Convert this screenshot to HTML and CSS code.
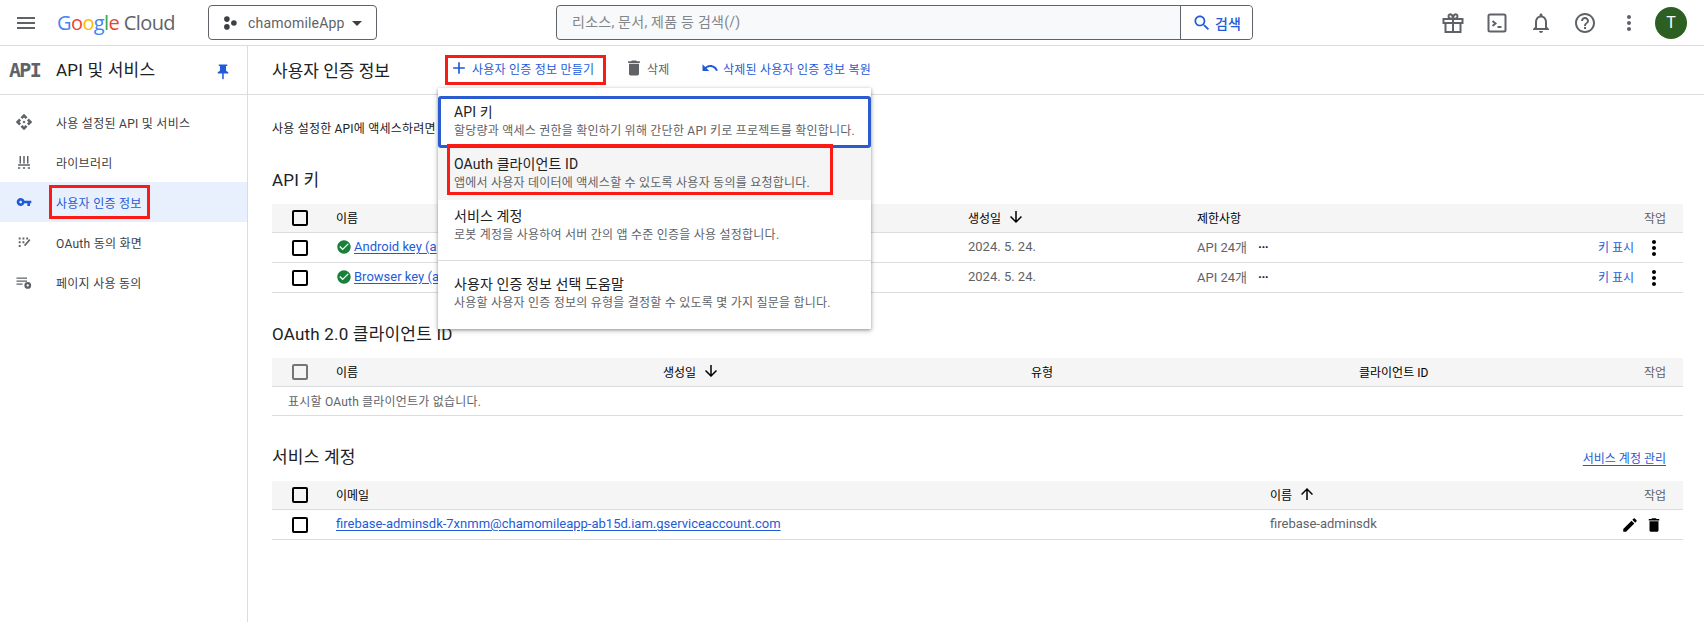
FILE: index.html
```html
<!DOCTYPE html>
<html lang="ko">
<head>
<meta charset="utf-8">
<title>사용자 인증 정보</title>
<link rel="stylesheet" href="styles.css">
</head>
<body>
<div class="page">
  <header class="topbar">
    <svg class="ico menu-ico" viewBox="0 0 24 24"><path d="M3 18h18v-2H3v2zm0-5h18v-2H3v2zm0-7v2h18V6H3z"/></svg>
    <div class="logo"><span class="b">G</span><span class="r">o</span><span class="y">o</span><span class="b">g</span><span class="g">l</span><span class="r">e</span> <span class="cloud">Cloud</span></div>
    <div class="project">
      <svg class="ico dots" viewBox="0 0 18 18"><circle cx="5" cy="4" r="3.600"/><circle cx="5" cy="14" r="3.600"/><circle cx="14" cy="9" r="3.600"/></svg>
      <span class="project-name">chamomileApp</span>
      <svg class="ico caret" viewBox="0 0 24 24"><path d="M7 10l5 5 5-5z"/></svg>
    </div>
    <div class="search">
      <span class="search-input">리소스, 문서, 제품 등 검색(/)</span>
      <span class="search-btn"><svg class="ico s20 blue" viewBox="0 0 24 24"><path d="M15.500 14h-.79l-.28-.27C15.410 12.590 16 11.110 16 9.500 16 5.910 13.090 3 9.500 3S3 5.910 3 9.500 5.910 16 9.500 16c1.610 0 3.090-.59 4.230-1.570l.27.28v.79l5 4.990L20.490 19l-4.990-5zm-6 0C7.010 14 5 11.990 5 9.500S7.010 5 9.500 5 14 7.010 14 9.500 11.990 14 9.500 14z"/></svg>검색</span>
    </div>
    <div class="top-actions">
      <svg class="ico s24 stroke" viewBox="0 0 24 24"><path d="M2.500 8h19v4h-19zM4.500 12v9h15v-9M12 8v13M12 8C9 8 7.500 6.800 7.500 5.300 7.500 3.800 9 3 10 3.500 11.300 4 12 6 12 8zM12 8c3 0 4.500-1.200 4.500-2.700 0-1.500-1.500-2.300-2.500-1.800C12.700 4 12 6 12 8z"/></svg>
      <svg class="ico s24 stroke" viewBox="0 0 24 24"><rect x="3.500" y="3.500" width="17" height="17" rx="1.500"/><path d="M7.500 10l3 2.500-3 2.500M12.500 16h4"/></svg>
      <svg class="ico s24" viewBox="0 0 24 24"><path d="M12 22c1.100 0 2-.9 2-2h-4c0 1.100.9 2 2 2zm6-6v-5c0-3.070-1.630-5.640-4.500-6.320V4c0-.83-.67-1.500-1.500-1.500s-1.500.67-1.500 1.500v.68C7.640 5.360 6 7.920 6 11v5l-2 2v1h16v-1l-2-2zm-2 1H8v-6c0-2.480 1.510-4.500 4-4.500s4 2.020 4 4.500v6z"/></svg>
      <svg class="ico s24" viewBox="0 0 24 24"><path d="M11 18h2v-2h-2v2zm1-16C6.480 2 2 6.480 2 12s4.480 10 10 10 10-4.480 10-10S17.520 2 12 2zm0 18c-4.410 0-8-3.590-8-8s3.590-8 8-8 8 3.590 8 8-3.590 8-8 8zm0-14c-2.210 0-4 1.790-4 4h2c0-1.100.9-2 2-2s2 .9 2 2c0 2-3 1.750-3 5h2c0-2.250 3-2.500 3-5 0-2.210-1.790-4-4-4z"/></svg>
      <svg class="ico s24" viewBox="0 0 24 24"><path d="M12 8c1.100 0 2-.9 2-2s-.9-2-2-2-2 .9-2 2 .9 2 2 2zm0 2c-1.100 0-2 .9-2 2s.9 2 2 2 2-.9 2-2-.9-2-2-2zm0 6c-1.100 0-2 .9-2 2s.9 2 2 2 2-.9 2-2-.9-2-2-2z"/></svg>
    </div>
    <div class="avatar">T</div>
  </header>

  <div class="content">
    <aside class="sidebar">
      <div class="side-head">
        <span class="api-mark">API</span>
        <span class="side-title">API 및 서비스</span>
        <svg class="ico pin" viewBox="0 0 24 24"><path d="M16 9V4h1c.55 0 1-.45 1-1s-.45-1-1-1H7c-.55 0-1 .45-1 1s.45 1 1 1h1v5c0 1.660-1.340 3-3 3v2h5.970v7l1 1 1-1v-7H19v-2c-1.660 0-3-1.340-3-3z"/></svg>
      </div>
      <nav class="nav">
        <a class="nav-item">
          <svg class="ico nav-ico" viewBox="0 0 24 24"><path d="M14 12l-2 2-2-2 2-2 2 2zm-2-6l2.120 2.120 2.500-2.500L12 1 7.380 5.620l2.500 2.500L12 6zm-6 6l2.120-2.120-2.500-2.500L1 12l4.620 4.620 2.500-2.500L6 12zm12 0l-2.120 2.120 2.500 2.500L23 12l-4.620-4.620-2.500 2.500L18 12zm-6 6l-2.120-2.120-2.500 2.500L12 23l4.620-4.620-2.500-2.500L12 18z"/></svg>
          사용 설정된 API 및 서비스
        </a>
        <a class="nav-item">
          <svg class="ico nav-ico" viewBox="0 0 24 24"><path d="M6 4h2v10H6zM11 4h2v10h-2zM16 4h2v10h-2zM4 15h16v2H4zM4 19h3v2H4zM10.500 19h3v2h-3zM17 19h3v2h-3z"/></svg>
          라이브러리
        </a>
        <a class="nav-item active">
          <svg class="ico nav-ico key-ico" viewBox="0 0 24 24"><path d="M12.650 10C11.830 7.670 9.610 6 7 6c-3.310 0-6 2.690-6 6s2.690 6 6 6c2.610 0 4.830-1.670 5.650-4H17v4h4v-4h2v-4H12.650zM7 14c-1.100 0-2-.9-2-2s.9-2 2-2 2 .9 2 2-.9 2-2 2z"/></svg>
          사용자 인증 정보
        </a>
        <a class="nav-item">
          <svg class="ico nav-ico" viewBox="0 0 24 24"><path d="M5 6h2.500v2.500H5zM10 6h2.500v2.500H10zM15 6h2.500v2.500H15zM5 11h2.500v2.500H5zM10 11h2.500v2.500H10zM5 16h2.500v2.500H5zM19 8l1.500 1.500-7 8L12 16z"/></svg>
          OAuth 동의 화면
        </a>
        <a class="nav-item">
          <svg class="ico nav-ico" viewBox="0 0 24 24"><path d="M2 6h14v1.500H2zM2 10h14v1.500H2zM2 14h8v1.500H2z"/><circle cx="17" cy="16.500" r="4.500"/><circle class="hole" cx="17" cy="16.500" r="1.500"/></svg>
          페이지 사용 동의
        </a>
      </nav>
    </aside>

    <main class="main">
      <div class="page-head">
        <h1 class="page-title">사용자 인증 정보</h1>
        <button class="act act-create"><svg class="ico s20 blue" viewBox="0 0 24 24"><path d="M19 13h-6v6h-2v-6H5v-2h6V5h2v6h6v2z"/></svg>사용자 인증 정보 만들기</button>
        <button class="act act-delete"><svg class="ico s20 grey" viewBox="0 0 24 24"><path d="M6 19c0 1.100.9 2 2 2h8c1.100 0 2-.9 2-2V7H6v12zM19 4h-3.500l-1-1h-5l-1 1H5v2h14V4z"/></svg>삭제</button>
        <button class="act act-restore"><svg class="ico s18 blue" viewBox="0 0 24 24"><path d="M12.500 8c-2.650 0-5.050.99-6.900 2.600L2 7v9h9l-3.620-3.620c1.390-1.160 3.160-1.880 5.120-1.880 3.540 0 6.550 2.310 7.600 5.500l2.370-.78C21.080 11.030 17.150 8 12.500 8z"/></svg>삭제된 사용자 인증 정보 복원</button>
      </div>

      <div class="body">
        <p class="intro">사용 설정한 API에 액세스하려면</p>

        <h2 class="sec sec-api">API 키</h2>
        <div class="table t-api">
          <div class="row head">
            <span class="cb"></span><span>이름</span><span class="sort">생성일<svg class="ico s18 black" viewBox="0 0 24 24"><path d="M20 12l-1.410-1.410L13 16.170V4h-2v12.170l-5.580-5.590L4 12l8 8 8-8z"/></svg></span><span>제한사항</span><span class="end muted">작업</span>
          </div>
          <div class="row">
            <span class="cb"></span><span class="name"><svg class="ico s16 green" viewBox="0 0 24 24"><path d="M12 2C6.480 2 2 6.480 2 12s4.480 10 10 10 10-4.480 10-10S17.520 2 12 2zm-2 15l-5-5 1.410-1.410L10 14.170l7.590-7.590L19 8l-9 9z"/></svg><a class="link">Android key (a</a></span><span class="muted val">2024. 5. 24.</span><span class="muted val limit">API 24개<b class="more">···</b></span><span class="end rowact"><a class="plain">키 표시</a><svg class="ico s24 black" viewBox="0 0 24 24"><path d="M12 8c1.100 0 2-.9 2-2s-.9-2-2-2-2 .9-2 2 .9 2 2 2zm0 2c-1.100 0-2 .9-2 2s.9 2 2 2 2-.9 2-2-.9-2-2-2zm0 6c-1.100 0-2 .9-2 2s.9 2 2 2 2-.9 2-2-.9-2-2-2z"/></svg></span>
          </div>
          <div class="row">
            <span class="cb"></span><span class="name"><svg class="ico s16 green" viewBox="0 0 24 24"><path d="M12 2C6.480 2 2 6.480 2 12s4.480 10 10 10 10-4.480 10-10S17.520 2 12 2zm-2 15l-5-5 1.410-1.410L10 14.170l7.590-7.590L19 8l-9 9z"/></svg><a class="link">Browser key (a</a></span><span class="muted val">2024. 5. 24.</span><span class="muted val limit">API 24개<b class="more">···</b></span><span class="end rowact"><a class="plain">키 표시</a><svg class="ico s24 black" viewBox="0 0 24 24"><path d="M12 8c1.100 0 2-.9 2-2s-.9-2-2-2-2 .9-2 2 .9 2 2 2zm0 2c-1.100 0-2 .9-2 2s.9 2 2 2 2-.9 2-2-.9-2-2-2zm0 6c-1.100 0-2 .9-2 2s.9 2 2 2 2-.9 2-2-.9-2-2-2z"/></svg></span>
          </div>
        </div>

        <h2 class="sec sec-oauth">OAuth 2.0 클라이언트 ID</h2>
        <div class="table t-oauth">
          <div class="row head">
            <span class="cb off"></span><span>이름</span><span class="sort">생성일<svg class="ico s18 black" viewBox="0 0 24 24"><path d="M20 12l-1.410-1.410L13 16.170V4h-2v12.170l-5.580-5.590L4 12l8 8 8-8z"/></svg></span><span>유형</span><span>클라이언트 ID</span><span class="end muted">작업</span>
          </div>
          <div class="row empty"><span class="muted">표시할 OAuth 클라이언트가 없습니다.</span></div>
        </div>

        <div class="sec-row">
          <h2 class="sec">서비스 계정</h2>
          <a class="link manage">서비스 계정 관리</a>
        </div>
        <div class="table t-svc">
          <div class="row head">
            <span class="cb"></span><span>이메일</span><span class="sort">이름<svg class="ico s18 black" viewBox="0 0 24 24"><path d="M4 12l1.410 1.410L11 7.830V20h2V7.830l5.580 5.590L20 12l-8-8-8 8z"/></svg></span><span class="end muted">작업</span>
          </div>
          <div class="row">
            <span class="cb"></span><span><a class="link">firebase-adminsdk-7xnmm@chamomileapp-ab15d.iam.gserviceaccount.com</a></span><span class="muted val">firebase-adminsdk</span><span class="end rowact svc-act"><svg class="ico s18 black" viewBox="0 0 24 24"><path d="M3 17.250V21h3.750L17.810 9.940l-3.750-3.750L3 17.250zM20.710 7.040c.39-.39.39-1.020 0-1.410l-2.340-2.340c-.39-.39-1.020-.39-1.410 0l-1.830 1.830 3.750 3.750 1.830-1.830z"/></svg><svg class="ico s18 black" viewBox="0 0 24 24"><path d="M6 19c0 1.100.9 2 2 2h8c1.100 0 2-.9 2-2V7H6v12zM19 4h-3.500l-1-1h-5l-1 1H5v2h14V4z"/></svg></span>
          </div>
        </div>
      </div>
    </main>
  </div>

  <div class="dropdown">
    <div class="opt focused"><strong>API 키</strong><small>할당량과 액세스 권한을 확인하기 위해 간단한 API 키로 프로젝트를 확인합니다.</small></div>
    <div class="opt hovered"><strong>OAuth 클라이언트 ID</strong><small>앱에서 사용자 데이터에 액세스할 수 있도록 사용자 동의를 요청합니다.</small></div>
    <div class="opt service"><strong>서비스 계정</strong><small>로봇 계정을 사용하여 서버 간의 앱 수준 인증을 사용 설정합니다.</small></div>
    <div class="opt helper"><strong>사용자 인증 정보 선택 도움말</strong><small>사용할 사용자 인증 정보의 유형을 결정할 수 있도록 몇 가지 질문을 합니다.</small></div>
  </div>

  <div class="mark mark-nav"></div>
  <div class="mark mark-create"></div>
  <div class="mark mark-oauth"></div>
</div>
</body>
</html>
```

FILE: styles.css
```css
* { box-sizing: border-box; }
html, body { margin: 0; padding: 0; }
body {
  font-family: Roboto, "Noto Sans CJK KR", sans-serif;
  color: #202124;
  background: #fff;
  font-size: 12px;
}
.page { position: relative; width: 1704px; height: 622px; overflow: hidden; display: flex; flex-direction: column; }
.ico { display: block; flex: none; fill: #5f6368; }
.s16 { width: 16px; height: 16px; }
.s18 { width: 18px; height: 18px; }
.s20 { width: 20px; height: 20px; }
.s24 { width: 24px; height: 24px; }
.blue { fill: #1f5bd8; }
.grey { fill: #5f6368; }
.black { fill: #000; }
.green { fill: #188038; }
.stroke { fill: none; stroke: #5f6368; stroke-width: 2; }

/* top bar */
.topbar { height: 46px; flex: none; border-bottom: 1px solid #dadce0; display: flex; align-items: center; padding-left: 14px; }
.menu-ico { width: 24px; height: 24px; margin-right: 19px; }
.logo { width: 151px; font-family: "Open Sans", sans-serif; font-size: 20px; letter-spacing: -.6px; white-space: nowrap; line-height: 44px; }
.logo .b { color: #4285f4; } .logo .r { color: #ea4335; } .logo .y { color: #fbbc04; } .logo .g { color: #34a853; } .logo .cloud { color: #5f6368; }
.project { width: 169px; height: 35px; border: 1px solid #5f6368; border-radius: 4px; display: flex; align-items: center; padding-left: 14px; color: #5f6368; font-size: 14px; }
.dots { width: 14px; height: 14px; fill: #3c4043; margin-right: 11px; }
.project-name { letter-spacing: .2px; }
.caret { width: 24px; height: 24px; margin-left: 0; fill: #3c4043; }
.search { width: 697px; height: 35px; margin-left: 179px; border: 1px solid #5f6368; border-radius: 4px; display: flex; background: #f8f9fa; }
.search-input { flex: 1; padding-left: 15px; line-height: 33px; font-size: 14px; letter-spacing: .25px; color: #80868b; }
.search-btn { width: 72px; border-left: 1px solid #5f6368; background: #fff; border-radius: 0 4px 4px 0; display: flex; align-items: center; justify-content: center; gap: 3px; color: #1f5bd8; font-size: 14px; font-weight: 500; }
.top-actions { display: flex; gap: 20px; margin-left: 188px; }
.avatar { width: 32px; height: 32px; margin-left: 14px; border-radius: 50%; background: #2d5f23; color: #fff; font-size: 16px; line-height: 32px; text-align: center; }

/* layout */
.content { flex: 1; display: flex; min-height: 0; }
.sidebar { width: 248px; flex: none; border-right: 1px solid #dadce0; }
.side-head { height: 49px; border-bottom: 1px solid #dadce0; display: flex; align-items: center; padding: 0 0 3px 9px; }
.api-mark { width: 47px; margin-top: 2px; font-family: "DejaVu Sans Mono", monospace; font-weight: 700; font-size: 20px; letter-spacing: -1.700px; color: #5f6368; }
.side-title { flex: 1; font-size: 17px; letter-spacing: .2px; color: #202124; }
.pin { width: 18px; height: 18px; margin: 6px 15px 0 0; fill: #1f5bd8; }
.nav { padding-top: 7px; }
.nav-item { height: 40px; display: flex; align-items: center; padding-left: 15px; color: #3c4043; font-size: 12px; letter-spacing: .27px; }
.nav-ico { width: 18px; height: 18px; margin-right: 23px; }
.key-ico { width: 16px; height: 16px; margin: 0 24px 0 1px; }
.nav-item.active { background: #e8f0fe; color: #1f5bd8; }
.nav-item.active .nav-ico { fill: #1f5bd8; }
.hole { fill: #fff; }

.main { flex: 1; min-width: 0; }
.page-head { height: 49px; border-bottom: 1px solid #dadce0; display: flex; align-items: center; padding: 0 0 2px 24px; }
.page-title { margin: 0; font-size: 17px; font-weight: 400; width: 177px; white-space: nowrap; }
.act { border: 0; background: none; padding: 0; margin-bottom: 2px; font: inherit; font-size: 12px; letter-spacing: .22px; display: flex; align-items: center; color: #1f5bd8; white-space: nowrap; }
.act-create { width: 175px; gap: 3px; }
.act-delete { width: 77px; gap: 3px; color: #5f6368; }
.act-restore { gap: 4px; }

.body { padding: 0 21px 0 24px; }
.intro { margin: 0; padding-top: 25px; height: 66px; line-height: 18px; font-size: 12px; letter-spacing: .2px; color: #202124; }
.sec { margin: 0; font-size: 17px; letter-spacing: .2px; font-weight: 400; line-height: 22px; color: #202124; }
.sec-api { height: 43px; padding-top: 8px; }
.sec-oauth { height: 35px; margin-top: 30px; }
.sec-row { display: flex; justify-content: space-between; align-items: center; margin-top: 17px; height: 48px; padding-right: 17px; }
.manage { font-size: 12px; letter-spacing: 0; }
.link { color: #1f5bd8; text-decoration: underline; text-underline-offset: 2px; }
.plain { color: #1f5bd8; }
.muted { color: #5f6368; }
.val { font-size: 13px; }

.table { width: 1411px; }
.row { display: grid; align-items: center; height: 30px; padding: 0 0 2px 20px; border-bottom: 1px solid #dadce0; font-size: 12px; white-space: nowrap; }
.head { height: 29px; background: #f5f5f5; color: #000; }
.t-api .row { grid-template-columns: 44px 632px 229px 1fr auto; }
.t-oauth .row { grid-template-columns: 44px 327px 368px 328px 1fr auto; }
.t-oauth .empty { display: flex; height: 29px; padding-left: 16px; letter-spacing: .2px; }
.t-svc .row { grid-template-columns: 44px 934px 1fr auto; }
.cb { display: block; width: 16px; height: 16px; margin-top: 2px; border: 2px solid #000; border-radius: 2px; }
.cb.off { border-color: #757575; }
.sort { display: flex; align-items: center; gap: 6px; }
.end { padding-right: 17px; justify-self: end; }
.name { display: flex; align-items: center; gap: 2px; font-size: 13px; overflow: hidden; }
.limit { display: flex; align-items: center; gap: 11px; }
.more { color: #202124; font-size: 13px; font-weight: 700; letter-spacing: -.5px; }
.rowact { display: flex; align-items: center; gap: 8px; padding-right: 17px; }
.rowact .ico { margin-top: 2px; }
.svc-act { gap: 6px; padding-right: 20px; }
.t-svc a.link { font-size: 13px; }

/* floating menu */
.dropdown { position: absolute; left: 438px; top: 88px; width: 433px; height: 241px; background: #fff; padding-top: 8px; box-shadow: 0 1px 3px rgba(60,64,67,.45), 0 2px 6px rgba(60,64,67,.2); }
.opt { display: flex; flex-direction: column; padding: 6px 16px 0; }
.opt strong { font-size: 14px; font-weight: 400; letter-spacing: .1px; line-height: 20px; color: #202124; }
.opt small { font-size: 12px; letter-spacing: .23px; line-height: 18px; color: #5f6368; white-space: nowrap; }
.focused { height: 52px; border: 3px solid #2a5bd0; border-radius: 3px; padding: 3px 13px 0; }
.hovered { height: 52px; background: #f5f5f5; }
.service { height: 61px; border-bottom: 1px solid #dadce0; }
.helper { padding-top: 13px; }

/* annotation boxes */
.mark { position: absolute; border: 3px solid #fb1b16; pointer-events: none; }
.mark-nav { left: 49px; top: 185px; width: 101px; height: 34px; }
.mark-create { left: 445px; top: 55px; width: 161px; height: 30px; }
.mark-oauth { left: 447px; top: 144px; width: 386px; height: 51px; }
```
